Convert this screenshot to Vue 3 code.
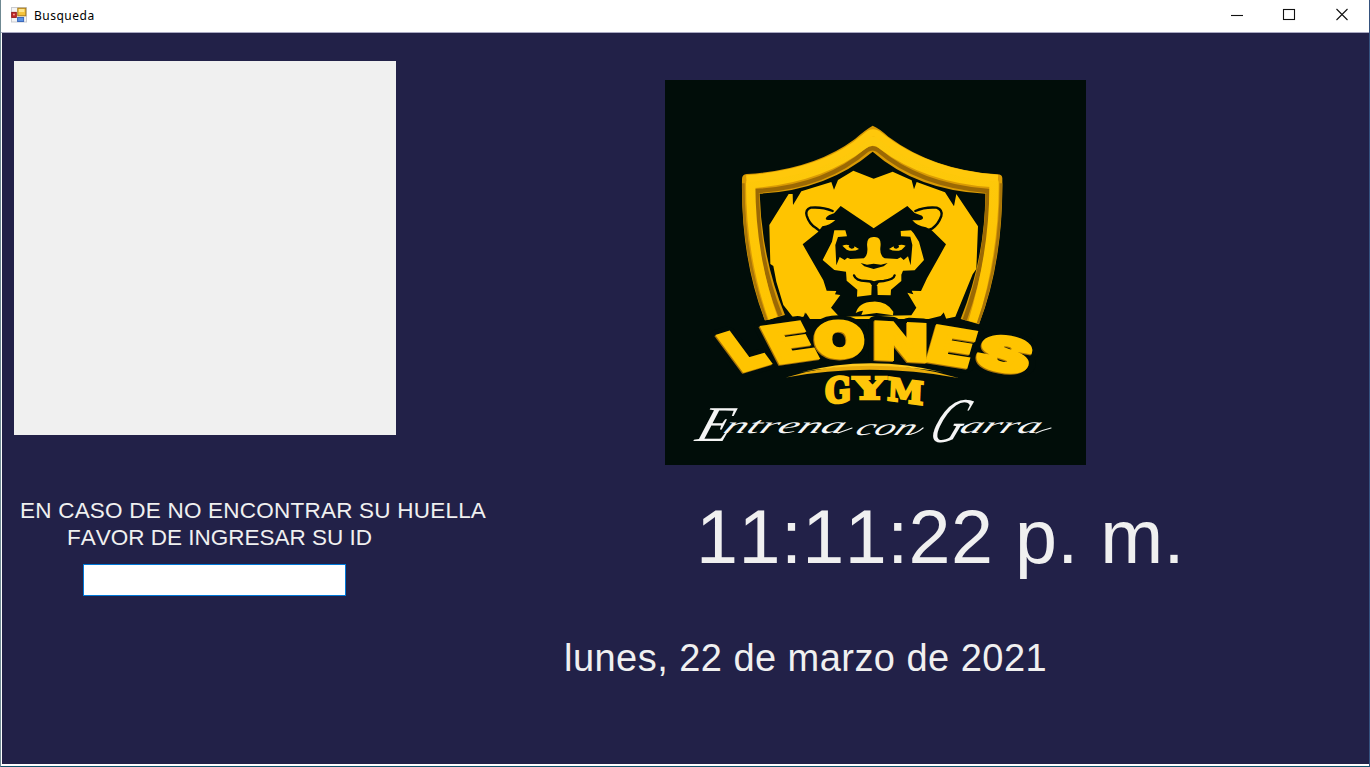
<script setup>
// Each letter is fitted to a slanted box: top-left, bottom-left and bottom-right corners.
const ctx = document.createElement('canvas').getContext('2d')
const fit = (font, stroke) => ({ ch, tl, bl, br }) => {
  ctx.font = font
  const box = ctx.measureText(ch)
  const left = -box.actualBoundingBoxLeft - stroke / 2
  const width = box.actualBoundingBoxRight + stroke / 2 - left
  const base = stroke / 2
  const cap = ctx.measureText('E').actualBoundingBoxAscent + stroke
  const a = (br[0] - bl[0]) / width
  const b = (br[1] - bl[1]) / width
  const c = (bl[0] - tl[0]) / cap
  const d = (bl[1] - tl[1]) / cap
  return { ch, m: `matrix(${a} ${b} ${c} ${d} ${bl[0] - a * left - c * base} ${bl[1] - b * left - d * base})` }
}
const arch = [
  { ch: 'L', tl: [715, 335], bl: [743, 373], br: [773, 364] },
  { ch: 'E', tl: [759, 326], bl: [779, 365], br: [821, 359] },
  { ch: 'O', tl: [813, 320], bl: [815, 359], br: [866, 359] },
  { ch: 'N', tl: [874, 320], bl: [874, 360], br: [927, 363] },
  { ch: 'E', tl: [936, 324], bl: [925, 362], br: [968, 369] },
  { ch: 'S', tl: [984, 331], bl: [972, 367], br: [1025, 377] }
].map(fit('900 100px Inter', 8))
const gym = [
  { ch: 'G', tl: [825, 377], bl: [825, 405], br: [850, 403] },
  { ch: 'Y', tl: [851, 376], bl: [851, 400], br: [888, 400] },
  { ch: 'M', tl: [888, 376], bl: [887, 401], br: [923, 406] }
].map(fit('bold 100px "DejaVu Serif"', 8))
</script>

<template>
  <div class="window">
    <header class="titlebar">
      <svg class="app-icon" viewBox="0 0 16 16">
        <rect x=".5" y=".5" width="15" height="14.5" fill="#f4f4f4" stroke="#c9cbd0" />
        <rect x="6.8" y="1.2" width="8" height="7.6" fill="#f5c33b" stroke="#a97a16" />
        <rect x="7.8" y="2" width="5.5" height="3" fill="#fde58d" />
        <rect x=".7" y="5.4" width="4.6" height="5" fill="#c52a2a" stroke="#971c1c" />
        <rect x="2" y="6.8" width="1.8" height="1.5" fill="#f4a09a" />
        <rect x="6.6" y="10.5" width="6" height="4" fill="#5a92e2" stroke="#3c69bb" />
      </svg>
      <span class="caption">Busqueda</span>
      <svg class="controls" viewBox="0 0 130 16" fill="none" stroke="#111" stroke-width="1.1">
        <path d="M6 9.500h12" />
        <rect x="58.5" y="3.5" width="11" height="10" />
        <path d="M111.5 3l11 11m0-11l-11 11" />
      </svg>
    </header>

    <main class="client">
      <section class="lookup">
        <div class="fingerprint"></div>
        <p class="hint first">EN CASO DE NO ENCONTRAR SU HUELLA</p>
        <p class="hint second">FAVOR DE INGRESAR SU ID</p>
        <input class="member-id" type="text" />
      </section>

      <section class="info">
        <svg class="logo" viewBox="665 80 421 385">
          <defs>
            <linearGradient id="gold" x1="0" y1="0" x2="0" y2="1">
              <stop offset="0" stop-color="#fdc90c" />
              <stop offset="1" stop-color="#ffc400" />
            </linearGradient>
          </defs>
          <rect x="665" y="80" width="422" height="386" fill="#010d09" />

          <g transform="translate(730 115) scale(.33333)">
            <!-- shield frame -->
            <path fill="#d99a04" d="M428 32Q405 45 375 72Q250 165 50 177Q36 178 36 192Q32 430 105 617L165 600Q95 430 89 236Q290 226 428 110Q560 226 766 236Q765 430 692 612L747 628Q820 440 817 190Q817 178 802 178Q610 165 475 65Q448 40 428 32Z" />
            <path fill="none" stroke="#9b6904" stroke-width="13" d="M151 602Q83 430 81 228Q285 215 410 106Q428 93 445 106Q565 210 773 228Q774 420 704 615" />
            <path fill="none" stroke="url(#gold)" stroke-width="28" stroke-linejoin="round" d="M129 610Q62 420 62 206Q270 190 397 91Q428 66 456 89Q590 190 792 203Q794 405 729 621" />
            <path fill="none" stroke="#ffc80b" stroke-width="21" stroke-linejoin="round" d="M49 191Q280 175 406 66Q428 43 450 63Q592 175 804 190" />
            <path fill="none" stroke="#a97508" stroke-width="8" d="M40 205Q39 425 109 615M813 205Q813 435 744 625" />

            <!-- mane -->
            <path fill="#ffc400" d="M118 330L176 237L188 237L189 270L214 229L304 201L312 224L324 195L370 167L431 191L488 170L545 196L552 223L560 201L645 232L672 274L679 237L744 334L739 462L728 478L676 605L644 612L640 594L632 603L596 612L240 612L228 594L220 605L190 608L160 570L139 500L130 453L121 447Z" />
            <path fill="#010d09" d="M220 615L225 592L234 615ZM630 615L641 592L650 615Z" />
          </g>

          <g transform="translate(790 195) scale(.33333)">
            <!-- head silhouette -->
            <path fill="#010d09" d="M38 148L84 111L97 94Q120 91 136 75L109 75Q103 69 118 60L132 55L152 33L251 100L352 33L374 54L396 62Q405 72 389 76L367 76Q380 92 408 97L425 106L468 148L411 250L393 288L365 287L370 298L352 293L379 338L364 361L148 365L123 338L151 300L135 298L139 288L110 287L100 256Z" />
            <!-- ears -->
            <path fill="#ffc400" d="M65 44Q99 41 122 53Q98 62 104 73L130 79Q112 91 92 91L82 101Q58 79 60 53ZM439 44Q407 41 383 53Q407 60 403 73L380 80Q390 91 411 91L423 100Q447 76 448 54Z" />
            <path fill="none" stroke="#010d09" stroke-width="7" stroke-linecap="round" stroke-linejoin="round" d="M128 48Q98 35 62 38Q45 44 50 62Q58 88 78 99L88 107M376 48Q405 35 440 38Q459 45 454 63Q445 88 426 101L414 105" />
            <!-- face -->
            <path fill="#ffc400" d="M133 106L166 106L171 124L144 126L136 150L139 211L149 186L164 195L172 188L181 192L222 190Q234 181 232 158Q227 124 253 126Q276 125 271 158Q269 182 284 190L322 192L332 187L341 195L354 184L362 211L367 150L361 125L333 124L332 108L363 106L371 115L387 140L402 195L374 226L339 227L334 239L334 258L303 284L302 301L263 300L262 273L245 273L244 300L201 305L202 284L170 257L168 230L133 225L98 195L126 140Z" />
            <!-- eyes -->
            <path fill="#ffc400" d="M157 152Q169 147 178 151Q172 157 184 161Q195 161 193 154L207 162Q189 172 170 164ZM347 152Q335 147 325 151Q331 158 319 161Q310 161 311 154L297 162Q316 172 335 164Z" />
            <!-- muzzle -->
            <path fill="#010d09" d="M212 204L231 209L251 206L273 209L293 204L281 214L251 222L223 214Z" />
            <path fill="none" stroke="#010d09" stroke-width="7" stroke-linecap="round" stroke-linejoin="round" d="M192 241Q197 257 228 258Q244 259 253 263Q262 259 281 258Q311 254 314 241" />
            <path fill="#010d09" d="M238 260L268 260L260 272L260 304L247 304L246 272Z" />
            <path fill="#ffc400" d="M197 354Q207 321 248 320Q288 317 310 350L309 361L260 354L214 360L219 347Q207 348 197 354Z" />
          </g>

          <!-- arched name -->
          <g class="name halo">
            <text v-for="(l, i) in arch" :key="i" :transform="l.m">{{ l.ch }}</text>
          </g>
          <g class="name face">
            <text v-for="(l, i) in arch" :key="i" :transform="l.m">{{ l.ch }}</text>
          </g>

          <path fill="#e9ac0b" d="M786 377.500Q870 352 958.500 378Q870 362 786 377.500Z" />
          <path fill="#ffcb20" d="M800 372.500Q870 354 944 372.500Q870 359 800 372.500Z" />

          <g class="gym">
            <text v-for="(l, i) in gym" :key="i" :transform="l.m">{{ l.ch }}</text>
          </g>

          <g class="motto">
            <text transform="translate(694 441) skewX(-18)" font-size="50" textLength="34" lengthAdjust="spacingAndGlyphs">E</text>
            <text transform="translate(722 433) skewX(-28)" font-size="23" textLength="120" lengthAdjust="spacingAndGlyphs">ntrena</text>
            <text transform="translate(854 435) skewX(-28)" font-size="23" textLength="59" lengthAdjust="spacingAndGlyphs">con</text>
            <text transform="translate(926 442) skewX(-25)" font-size="64" textLength="31" lengthAdjust="spacingAndGlyphs">G</text>
            <text transform="translate(958 433) skewX(-28)" font-size="23" textLength="80" lengthAdjust="spacingAndGlyphs">arra</text>
            <path d="M838 433Q844 431 852 428M911 434Q917 433 923 428M1036 433Q1043 430 1051 428" />
          </g>
        </svg>
        <div class="clock">11:11:22 p. m.</div>
        <div class="date">lunes, 22 de marzo de 2021</div>
      </section>
    </main>
  </div>
</template>

<style>
body { margin: 0; overflow: hidden; }
</style>

<style scoped>
.window {
  box-sizing: border-box;
  width: 1370px;
  height: 767px;
  display: flex;
  flex-direction: column;
  background: #fff;
  border-left: 1px solid #6f8992;
  border-right: 1px solid #35527e;
  border-bottom: 1px solid #12566f;
  font-family: "Liberation Sans", Arial, sans-serif;
  font-kerning: none;
}
.titlebar {
  height: 32px;
  display: flex;
  align-items: flex-start;
  background: #fff;
  border-bottom: 1px solid #a9a9c2;
}
.app-icon { width: 16px; height: 16px; margin: 7px 0 0 10px; }
.caption {
  margin: 7px 0 0 7px;
  font: 12px/17px "Noto Sans", "Open Sans", sans-serif;
  letter-spacing: .5px;
  color: #000;
}
.controls { width: 130px; height: 16px; margin: 6px 14px 0 auto; }
.client {
  flex: 1;
  margin: 0 0 2px 1px;
  display: grid;
  grid-template-columns: 562px 1fr;
  background: #222148;
  color: #f0f0f0;
}
.lookup { padding: 28px 0 0 12px; }
.fingerprint { width: 382px; height: 374px; background: #f0f0f0; }
.hint {
  margin: 0;
  font-size: 22.500px;
  line-height: 27px;
  white-space: nowrap;
}
.first { padding: 62px 0 0 6px; letter-spacing: .22px; }
.second { padding-left: 53px; }
.member-id {
  display: block;
  box-sizing: border-box;
  width: 263px;
  height: 32px;
  margin: 13px 0 0 69px;
  border: 1px solid #0078d7;
  background: #fff;
  outline: none;
}
.info { display: flex; flex-direction: column; align-items: flex-start; }
.logo { display: block; width: 421px; height: 385px; margin: 47px 0 0 101px; }
.clock {
  margin: 28px 0 0 132px;
  font-size: 75.500px;
  letter-spacing: .45px;
  line-height: 88px;
  white-space: nowrap;
}
.date {
  margin: 55px 0 0 0;
  font-size: 38px;
  letter-spacing: .46px;
  line-height: 44px;
  white-space: nowrap;
}
.name { font: 900 100px Inter, sans-serif; }
.halo { fill: #010d09; stroke: #010d09; stroke-width: 26px; stroke-linejoin: round; }
.face {
  fill: #ffc400;
  stroke: #ffc400;
  stroke-width: 8px;
  filter: drop-shadow(-.6px 1.800px 0 #a87208);
}
.gym { font: bold 100px "DejaVu Serif", serif; fill: #ffc60a; stroke: #ffc60a; stroke-width: 8px; }
.motto { font-family: "Liberation Serif", serif; font-style: italic; fill: #f5f5f5; }
.motto path { fill: none; stroke: #f5f5f5; stroke-width: 1.200px; stroke-linecap: round; }
</style>
